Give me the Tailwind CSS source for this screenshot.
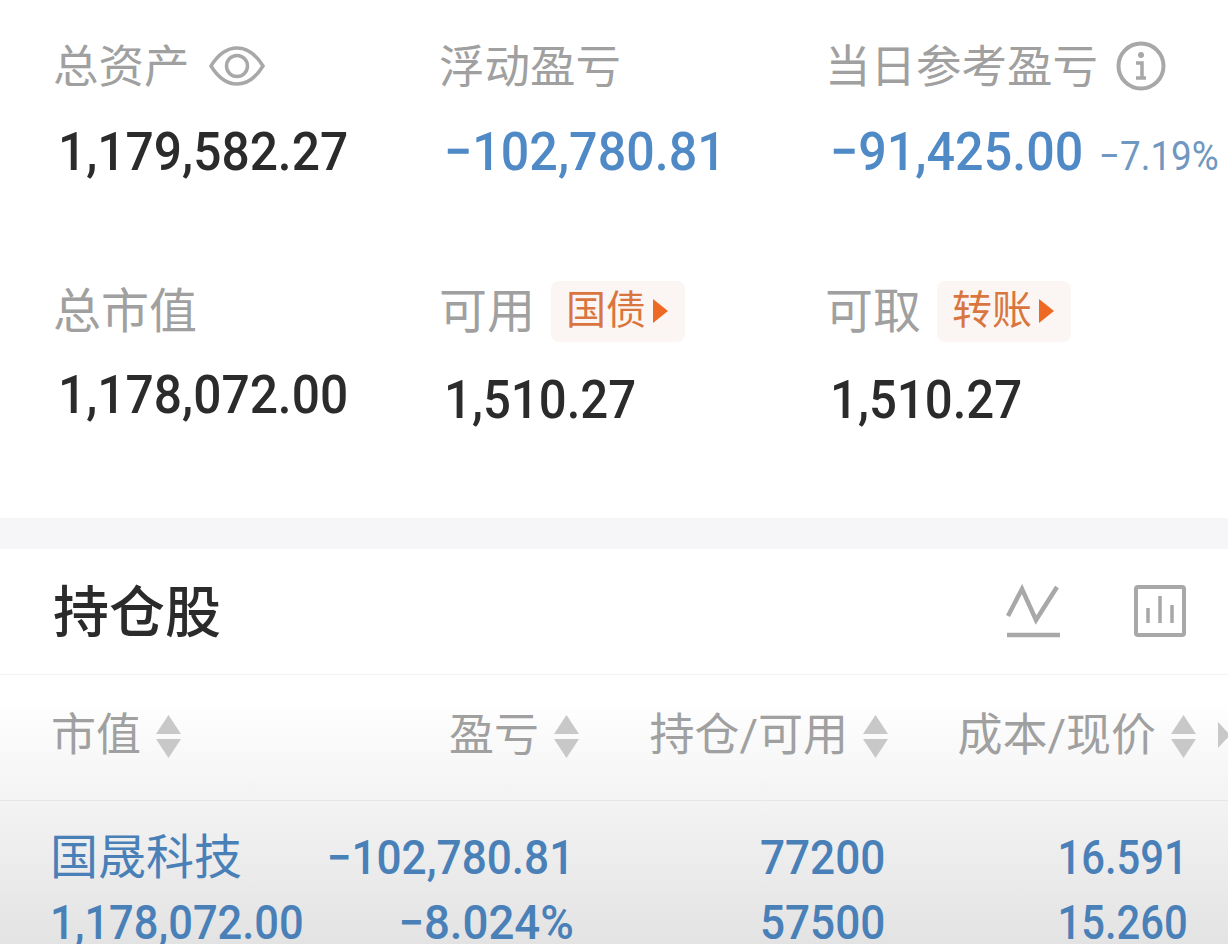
<!DOCTYPE html>
<html lang="zh-CN">

<head>
    <meta charset="UTF-8">
    <meta name="viewport" content="width=device-width, initial-scale=1.0">
    <title>持仓</title>
    <script src="https://cdn.jsdelivr.net/npm/@tailwindcss/browser@4"></script>
</head>

<body class="bg-white w-[1228px] h-[944px] overflow-hidden font-['Roboto','Noto_Sans_CJK_SC',sans-serif]">
    <!-- account summary -->
    <section class="h-[518px] pt-[36px] pl-[53px] grid grid-cols-[386px_386px_389px] grid-rows-[245px_auto] content-start">
        <div>
            <div class="h-[60px] flex items-center text-[45.5px] text-[#a0a0a0]">
                <span class="pt-[4px]">总资产</span>
                <svg class="ml-[19px] w-[56px] h-[46px]" viewBox="0 0 56 46" fill="none" stroke="#a8a8a8" stroke-width="3.5">
                    <path d="M2 23C10 10 18 5 28 5s18 5 26 18c-8 13-16 18-26 18S10 36 2 23z" />
                    <circle cx="28" cy="23" r="10.5" />
                </svg>
            </div>
            <div class="h-[60px] mt-[26px] ml-[5px] text-[54px] font-medium leading-[60px] text-[#2b2b2b]"><span class="inline-block origin-left scale-x-[0.92]">1,179,582.27</span></div>
        </div>
        <div>
            <div class="h-[60px] flex items-center text-[45.5px] text-[#a0a0a0]"><span class="pt-[4px]">浮动盈亏</span></div>
            <div class="h-[60px] mt-[26px] ml-[5px] text-[54px] font-medium leading-[60px] text-[#4f8ac6]"><span class="inline-block origin-left scale-x-[0.93]">−102,780.81</span></div>
        </div>
        <div>
            <div class="h-[60px] flex items-center text-[45.5px] text-[#a0a0a0]">
                <span class="pt-[4px]">当日参考盈亏</span>
                <svg class="ml-[18px] w-[50px] h-[50px]" viewBox="0 0 50 50" fill="none" stroke="#a8a8a8">
                    <circle cx="25" cy="25" r="22.5" stroke-width="4" />
                    <circle cx="25" cy="14" r="3" fill="#a8a8a8" stroke="none" />
                    <path d="M20 22h6v14M20 37h10" stroke-width="3.5" />
                </svg>
            </div>
            <div class="h-[60px] mt-[26px] ml-[5px] flex items-baseline leading-[60px] font-medium text-[#4f8ac6]">
                <span class="inline-block origin-left scale-x-[0.93] text-[54px]">−91,425.00</span>
                <span class="inline-block origin-left scale-x-[0.92] text-[40px] font-normal ml-[-3px] text-[#6f97c0]">−7.19%</span>
            </div>
        </div>

        <div>
            <div class="h-[60px] flex items-center text-[48px] text-[#a0a0a0]"><span class="pt-[2px]">总市值</span></div>
            <div class="h-[60px] mt-[24px] ml-[5px] text-[54px] font-medium leading-[60px] text-[#2b2b2b]"><span class="inline-block origin-left scale-x-[0.92]">1,178,072.00</span></div>
        </div>
        <div>
            <div class="h-[60px] flex items-center text-[48px] text-[#a0a0a0]">
                <span class="pt-[2px]">可用</span>
                <a class="ml-[16px] w-[134px] h-[61px] pl-[15px] flex items-center gap-[7px] rounded-lg bg-[#fbf6f4] text-[40px] text-[#d9763f]">
                    <span>国债</span>
                    <span class="w-0 h-0 border-y-[12px] border-y-transparent border-l-[15px] border-l-[#ee6a24]"></span>
                </a>
            </div>
            <div class="h-[60px] mt-[29px] ml-[5px] text-[54px] font-medium leading-[60px] text-[#2b2b2b]"><span class="inline-block origin-left scale-x-[0.91]">1,510.27</span></div>
        </div>
        <div>
            <div class="h-[60px] flex items-center text-[48px] text-[#a0a0a0]">
                <span class="pt-[2px]">可取</span>
                <a class="ml-[16px] w-[134px] h-[61px] pl-[15px] flex items-center gap-[7px] rounded-lg bg-[#fbf6f4] text-[40px] text-[#d9763f]">
                    <span>转账</span>
                    <span class="w-0 h-0 border-y-[12px] border-y-transparent border-l-[15px] border-l-[#ee6a24]"></span>
                </a>
            </div>
            <div class="h-[60px] mt-[29px] ml-[5px] text-[54px] font-medium leading-[60px] text-[#2b2b2b]"><span class="inline-block origin-left scale-x-[0.91]">1,510.27</span></div>
        </div>
    </section>

    <div class="h-[31px] bg-[#f6f6f8]"></div>

    <!-- holdings title -->
    <section class="h-[126px] pl-[53px] pr-[42px] flex items-center justify-between border-b border-[#f3f3f5]">
        <h2 class="text-[56px] font-medium text-[#2b2b2b] pt-[2px]">持仓股</h2>
        <div class="flex items-center gap-[74px] pb-[2px]">
            <svg class="w-[54px] h-[54px]" viewBox="0 0 54 54" fill="none" stroke="#a8a8a8" stroke-width="4.5">
                <path d="M2 32L16 5l14 31L51 3" />
                <path d="M1 51h53" />
            </svg>
            <svg class="w-[52px] h-[52px]" viewBox="0 0 52 52" fill="none" stroke="#a8a8a8">
                <rect x="2" y="2" width="48" height="48" rx="2" stroke-width="4" />
                <path d="M14 23v15M26 11v27M38 20v18" stroke-width="3.5" />
            </svg>
        </div>
    </section>

    <!-- holdings table -->
    <section class="h-[269px] bg-linear-to-b from-white from-[8%] to-[#e3e3e3]">
        <div class="relative h-[126px] pl-[51px] pb-[3px] grid grid-cols-[289px_240px_309px_308px] items-center border-b border-[#e6e6e8] text-[45px] text-[#a0a0a0]">
            <div class="flex items-center gap-[14px]">
                <span>市值</span>
                <svg class="w-[27px] h-[43px]" viewBox="0 0 27 43" fill="#c8c8c8"><path d="M13.5 0L26 19H1z" /><path d="M1 24h25L13.5 43z" /></svg>
            </div>
            <div class="flex items-center justify-end gap-[14px]">
                <span>盈亏</span>
                <svg class="w-[27px] h-[43px]" viewBox="0 0 27 43" fill="#c8c8c8"><path d="M13.5 0L26 19H1z" /><path d="M1 24h25L13.5 43z" /></svg>
            </div>
            <div class="flex items-center justify-end gap-[14px]">
                <span>持仓/可用</span>
                <svg class="w-[27px] h-[43px]" viewBox="0 0 27 43" fill="#c8c8c8"><path d="M13.5 0L26 19H1z" /><path d="M1 24h25L13.5 43z" /></svg>
            </div>
            <div class="flex items-center justify-end gap-[14px]">
                <span>成本/现价</span>
                <svg class="w-[27px] h-[43px]" viewBox="0 0 27 43" fill="#c8c8c8"><path d="M13.5 0L26 19H1z" /><path d="M1 24h25L13.5 43z" /></svg>
            </div>
            <span class="absolute right-[-2px] top-[47px] w-0 h-0 border-y-[13px] border-y-transparent border-l-[12px] border-l-[#c8c8c8]"></span>
        </div>
        <div class="pt-[24px] pl-[50px] grid grid-cols-[282px_242px_311px_303px] text-[#4a80b8] font-medium text-[48px] leading-[65px]">
            <div class="text-[48px] font-normal">国晟科技</div>
            <div class="flex justify-end"><span class="inline-block origin-right scale-x-[0.92]">−102,780.81</span></div>
            <div class="flex justify-end"><span class="inline-block origin-right scale-x-[0.92]">77200</span></div>
            <div class="flex justify-end"><span class="inline-block origin-right scale-x-[0.87]">16.591</span></div>
            <div><span class="inline-block origin-left scale-x-[0.905]">1,178,072.00</span></div>
            <div class="flex justify-end"><span class="inline-block origin-right scale-x-[0.95]">−8.024%</span></div>
            <div class="flex justify-end"><span class="inline-block origin-right scale-x-[0.92]">57500</span></div>
            <div class="flex justify-end"><span class="inline-block origin-right scale-x-[0.87]">15.260</span></div>
        </div>
    </section>
</body>

</html>
